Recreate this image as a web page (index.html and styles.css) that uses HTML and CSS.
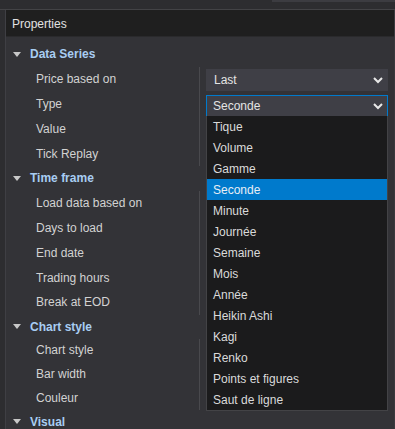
FILE: index.html
```html
<!DOCTYPE html>
<html>
<head>
<meta charset="utf-8">
<link rel="stylesheet" href="styles.css">
</head>
<body>
<div class="topstrip"><div class="tab"></div></div>
<div class="panel">
  <div class="title">Properties</div>
  <div class="grid">
    <div class="row cat s1"><span class="tri"></span><span>Data Series</span></div>
    <div class="row prop s1"><span class="label">Price based on</span><span class="val"><span class="select">Last<svg class="chev" viewBox="0 0 10 6"><path d="M1 1 L5 5 L9 1" /></svg></span></span></div>
    <div class="row prop s1"><span class="label">Type</span><span class="val"><span class="select active">Seconde<svg class="chev" viewBox="0 0 10 6"><path d="M1 1 L5 5 L9 1" /></svg></span></span></div>
    <div class="row prop s1"><span class="label">Value</span><span class="val"></span></div>
    <div class="row prop s1"><span class="label">Tick Replay</span><span class="val"></span></div>
    <div class="row cat s2"><span class="tri"></span><span>Time frame</span></div>
    <div class="row prop s2"><span class="label">Load data based on</span><span class="val"></span></div>
    <div class="row prop s2"><span class="label">Days to load</span><span class="val"></span></div>
    <div class="row prop s2"><span class="label">End date</span><span class="val"></span></div>
    <div class="row prop s2"><span class="label">Trading hours</span><span class="val"></span></div>
    <div class="row prop s2"><span class="label">Break at EOD</span><span class="val"></span></div>
    <div class="row cat s3"><span class="tri"></span><span>Chart style</span></div>
    <div class="row prop s3"><span class="label">Chart style</span><span class="val"></span></div>
    <div class="row prop s3"><span class="label">Bar width</span><span class="val"></span></div>
    <div class="row prop s3"><span class="label">Couleur</span><span class="val"></span></div>
    <div class="row cat s3"><span class="tri"></span><span>Visual</span></div>
  </div>
  <ul class="list">
    <li>Tique</li>
    <li>Volume</li>
    <li>Gamme</li>
    <li class="sel">Seconde</li>
    <li>Minute</li>
    <li>Journée</li>
    <li>Semaine</li>
    <li>Mois</li>
    <li>Année</li>
    <li>Heikin Ashi</li>
    <li>Kagi</li>
    <li>Renko</li>
    <li>Points et figures</li>
    <li>Saut de ligne</li>
  </ul>
</div>
</body>
</html>
```
FILE: styles.css
```css
* { box-sizing: border-box; }
html, body {
  margin: 0;
  padding: 0;
  width: 395px;
  height: 429px;
  overflow: hidden;
  background: #2d2d30;
  font-family: "Liberation Sans", Arial, sans-serif;
  font-size: 12px;
}
.topstrip {
  height: 10px;
  background: #2d2d30;
  display: flex;
  justify-content: flex-end;
  border-bottom: 1px solid #434346;
}
.tab {
  width: 123px;
  height: 2px;
  background: #3c3c41;
}
.panel {
  position: relative;
  margin-left: 5px;
  border-left: 1px solid #3f3f44;
  background: #333337;
  height: 419px;
  border-right: 1px solid #3a3a3e;
}
.title {
  height: 27px;
  background: #1f1f1f;
  color: #e2e2e2;
  padding-left: 6px;
  padding-top: 2px;
  display: flex;
  align-items: center;
  border-bottom: 1px solid #2a2a2c;
}
.grid {
  padding-top: 5px;
}
.row {
  display: flex;
  align-items: center;
}
.s1 { height: 24.8px; }
.s2 { height: 24.8px; }
.s3 { height: 23.8px; }
.cat {
  color: #a8cdf2;
  font-weight: bold;
  padding-left: 7px;
}
.tri {
  width: 0;
  height: 0;
  border-left: 4.5px solid transparent;
  border-right: 4.5px solid transparent;
  border-top: 5px solid #c8c8c8;
  margin-right: 9px;
}
.prop .label {
  color: #d2d2d2;
  padding-left: 30px;
  width: 193px;
  align-self: stretch;
  display: flex;
  align-items: center;
}
.prop .val {
  align-self: stretch;
  flex: 1;
  border-left: 1px solid #49494d;
  display: flex;
  align-items: center;
  padding-left: 6px;
}
.select {
  width: 182px;
  height: 22px;
  background: #3f3f46;
  color: #e4e4e4;
  display: flex;
  align-items: center;
  justify-content: space-between;
  padding: 0 4px 0 7px;
  border: 1px solid #3f3f46;
  margin-top: 2px;
}
.select.active {
  border-color: #007acc;
  height: 22px;
  margin-top: 3px;
  padding-left: 6px;
}
.chev {
  width: 10px;
  height: 6px;
  overflow: visible;
}
.chev path {
  fill: none;
  stroke: #e8e8e8;
  stroke-width: 2;
}
.list {
  position: absolute;
  top: 106px;
  left: 200px;
  width: 182px;
  height: 295px;
  margin: 0;
  padding: 0;
  list-style: none;
  background: #1b1b1c;
  border: 1px solid #434346;
  border-top: none;
}
.list li {
  height: 21px;
  display: flex;
  align-items: center;
  padding-left: 6px;
  padding-top: 1px;
  color: #dadada;
}
.list li.sel {
  background: #007acc;
  color: #e8eef5;
}
```
